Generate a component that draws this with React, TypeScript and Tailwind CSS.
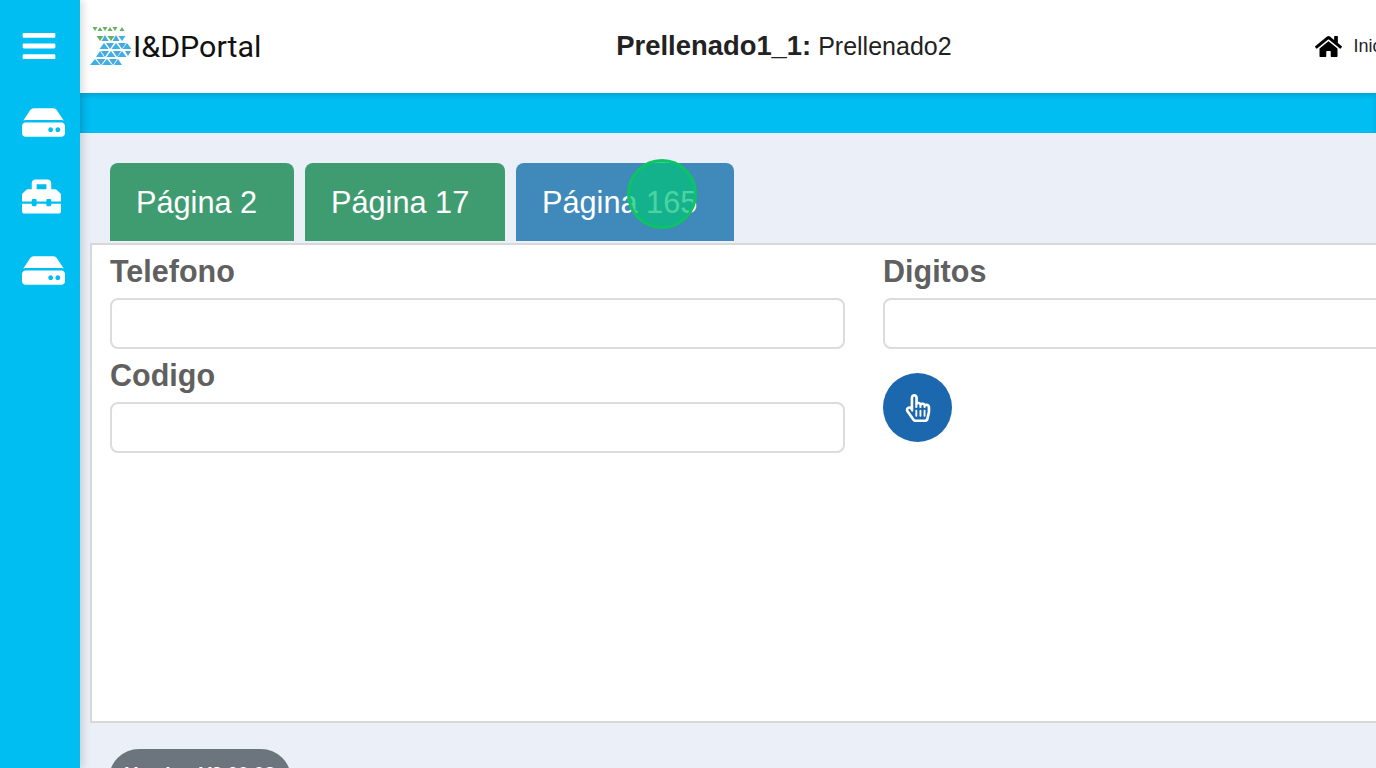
import { FaBars, FaHdd, FaToolbox, FaHome, FaRegHandPointer } from "react-icons/fa";

type Tri = [number, number, number, number, boolean, string];

const G = "#62b35c";
const B = "#3fb0e6";
const B2 = "#4aa8dd";

const tris: Tri[] = [
  [95, 27, 5, 4, false, G],
  [100, 27, 5, 4, true, G],
  [105, 27, 5, 4, false, G],
  [110, 27, 5, 4, true, G],
  [115, 27, 5, 4, false, G],
  [122, 27, 5, 4, true, G],
  [100, 36, 7, 5, false, G],
  [111, 36, 7, 5, false, G],
  [122, 36, 7, 5, false, B],
  [105, 35, 7, 6, true, B2],
  [116, 35, 7, 6, true, B2],
  [104, 43, 9, 6, true, B],
  [116, 43, 9, 6, true, B],
  [127, 43, 9, 6, true, B],
  [110, 43, 8, 6, false, B2],
  [122, 43, 8, 6, false, B2],
  [100, 51, 8, 6, true, B],
  [111, 51, 9, 6, true, B],
  [122, 51, 9, 6, true, B],
  [105, 51, 8, 6, false, B2],
  [117, 51, 8, 6, false, B2],
  [128, 51, 6, 5, false, B2],
  [95, 59, 10, 6, true, B],
  [107, 59, 10, 6, true, B],
  [118, 59, 8, 6, true, B],
  [101, 59, 9, 6, false, B2],
  [113, 59, 8, 6, false, B2],
];

function Logo() {
  return (
    <svg width="46" height="40" viewBox="88 26 46 40" className="shrink-0">
      {tris.map(([x, y, w, h, up, c], i) => (
        <polygon
          key={i}
          points={
            up
              ? `${x - w / 2},${y + h} ${x + w / 2},${y + h} ${x},${y}`
              : `${x - w / 2},${y} ${x + w / 2},${y} ${x},${y + h}`
          }
          fill={c}
        />
      ))}
    </svg>
  );
}

function Field({ label, className }: { label: string; className?: string }) {
  return (
    <div className={className}>
      <div className="text-[30.5px] leading-[38px] font-bold text-[#606060] mb-[8px]">{label}</div>
      <div className="h-[51px] bg-white border-2 border-[#dcdcdc] rounded-lg" />
    </div>
  );
}

function Tab({ label, className }: { label: string; className: string }) {
  return (
    <div className={`h-[78px] rounded-t-lg flex items-center text-white text-[30.7px] pt-[2px] ${className}`}>{label}</div>
  );
}

export default function App() {
  return (
    <div className="relative w-[1376px] h-[768px] overflow-hidden flex font-['Liberation_Sans',sans-serif] bg-[#ebeff7]">
      <aside className="w-[80px] shrink-0 bg-[#00bdf2] flex flex-col items-center text-white shadow-[3px_0_8px_rgba(0,0,0,0.15)] z-10">
        <FaBars className="mt-[29px] text-[34px] -translate-x-[1px] scale-x-110" />
        <FaHdd className="mt-[38px] text-[43px] translate-x-[3px]" />
        <FaToolbox className="mt-[33px] text-[39px] translate-x-[1px]" />
        <FaHdd className="mt-[33px] text-[43px] translate-x-[3px]" />
      </aside>
      <main className="flex-1 min-w-0 flex flex-col">
        <header className="h-[93px] shrink-0 bg-white flex items-center">
          <div className="ml-[8px] flex items-center">
            <Logo />
            <span className="text-[30.4px] text-[#111] font-['Roboto',sans-serif] -ml-[1px]">I&amp;DPortal</span>
          </div>
          <div className="ml-[355px] text-[25px] text-[#222] whitespace-nowrap -translate-y-[1px]">
            <b className="text-[27.4px]">Prellenado1_1:</b> Prellenado2
          </div>
          <div className="ml-[363px] flex items-center gap-[12px] whitespace-nowrap">
            <FaHome className="text-[27px] text-black" />
            <span className="text-[18px] text-[#222]">Inicio</span>
          </div>
        </header>
        <div className="h-[40px] shrink-0 bg-[#00bdf2] shadow-[inset_0_3px_4px_rgba(0,0,0,0.12)]" />
        <div className="pt-[30px] w-[1400px]">
          <div className="ml-[30px] flex gap-[11px]">
            <Tab label="Página 2" className="w-[184px] pl-[26px] bg-[#3f9c70]" />
            <Tab label="Página 17" className="w-[200px] pl-[26px] bg-[#3f9c70]" />
            <Tab label="Página 165" className="w-[218px] pl-[26px] bg-[#3f8abb]" />
          </div>
          <section className="mt-[2px] ml-[10px] h-[480px] bg-white border-2 border-[#d8d8d8] px-[18px] pt-[7px] grid grid-cols-[735px_1fr] gap-x-[38px] content-start">
            <Field label="Telefono" />
            <Field label="Digitos" />
            <Field label="Codigo" className="mt-[7px]" />
            <div className="mt-[24px] w-[69px] h-[69px] rounded-full bg-[#1c68ae] flex items-center justify-center text-white text-[28px]">
              <FaRegHandPointer />
            </div>
          </section>
          <div className="mt-[26px] ml-[29px] w-[182px] h-[60px] rounded-[30px] bg-[#6c757d] text-white text-[19px] font-bold text-center pt-[11px]">
            Version V2.00.03
          </div>
        </div>
      </main>
      <div className="absolute left-[627px] top-[159px] w-[70px] h-[70px] rounded-full bg-[#00c278]/70 border-[3px] border-[#0cc464] z-20" />
    </div>
  );
}
